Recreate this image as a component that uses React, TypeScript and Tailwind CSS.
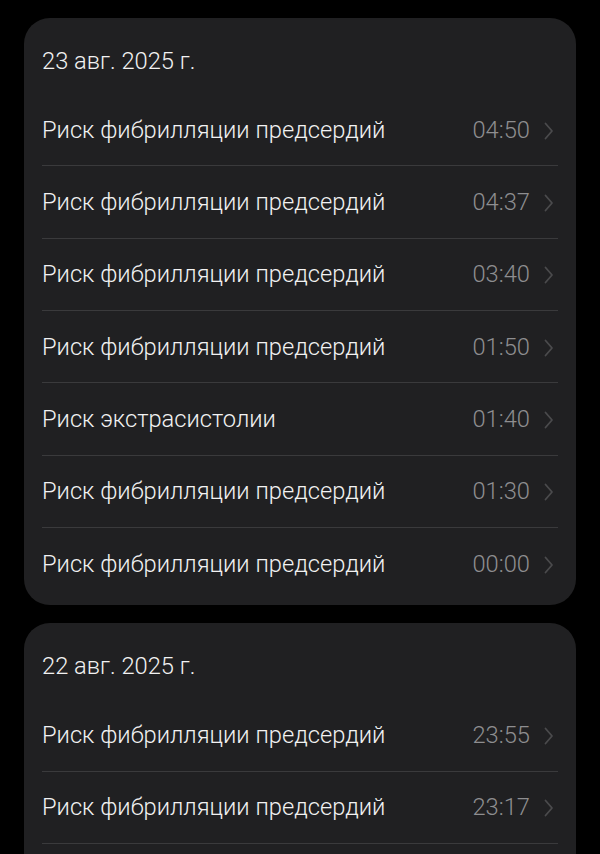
import React from "react";

const Chevron = () => (
  <svg width="10" height="18" viewBox="0 0 10 18" fill="none" className="ml-[14px] mr-[4px] shrink-0">
    <path d="M1.5 1.5 L8 9 L1.5 16.5" stroke="#4a4a4c" strokeWidth="1.8" strokeLinecap="round" strokeLinejoin="round" />
  </svg>
);

type Item = { title: string; time: string };

const groups: { date: string; items: Item[] }[] = [
  {
    date: "23 авг. 2025 г.",
    items: [
      { title: "Риск фибрилляции предсердий", time: "04:50" },
      { title: "Риск фибрилляции предсердий", time: "04:37" },
      { title: "Риск фибрилляции предсердий", time: "03:40" },
      { title: "Риск фибрилляции предсердий", time: "01:50" },
      { title: "Риск экстрасистолии", time: "01:40" },
      { title: "Риск фибрилляции предсердий", time: "01:30" },
      { title: "Риск фибрилляции предсердий", time: "00:00" },
    ],
  },
  {
    date: "22 авг. 2025 г.",
    items: [
      { title: "Риск фибрилляции предсердий", time: "23:55" },
      { title: "Риск фибрилляции предсердий", time: "23:17" },
    ],
  },
];

export default function App() {
  return (
    <div
      className="w-[600px] h-[854px] overflow-hidden bg-black px-[24px] pt-[18px] flex flex-col gap-[18px]"
      style={{ fontFamily: "Roboto, 'Noto Sans', sans-serif" }}
    >
      {groups.map((g, gi) => (
        <div key={gi} className="bg-[#202022] rounded-[26px] px-[18px] pb-[6px] shrink-0">
          <div className="h-[76px] pt-[29px] text-[23.7px] font-light leading-[28px] text-[#f2f2f2]">{g.date}</div>
          {g.items.map((it, i) => (
            <React.Fragment key={i}>
              {i > 0 && <div className="h-px bg-[#3a3a3c]" />}
              <div className="h-[71.33px] flex items-center pt-[2px]">
                <div className="flex-1 text-[23.7px] font-light text-[#f2f2f2] leading-none">{it.title}</div>
                <div className="text-[23.7px] font-light text-[#8e8e90] leading-none">{it.time}</div>
                <Chevron />
              </div>
            </React.Fragment>
          ))}
          {gi === 1 && <div className="h-px bg-[#3a3a3c]" />}
          {gi === 1 && <div className="h-[40px]" />}
        </div>
      ))}
    </div>
  );
}
